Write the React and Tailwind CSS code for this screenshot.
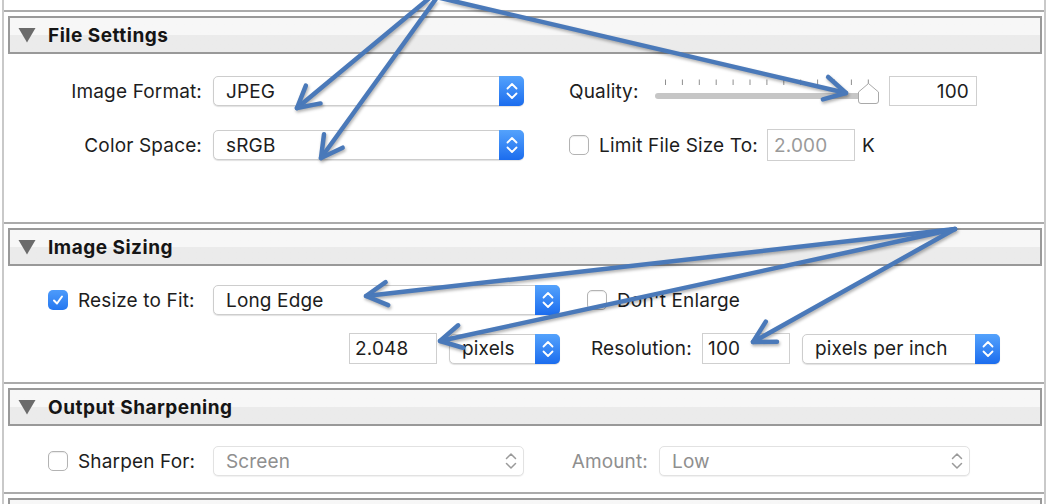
import React from "react";

function Stepper({ disabled }) {
  if (disabled) {
    return (
      <div className="flex w-[25px] items-center justify-center">
        <svg width="14" height="20" viewBox="0 0 14 20">
          <path d="M2.5 7.5 L7 3 L11.5 7.5" fill="none" stroke="#9a9a9a" strokeWidth="1.5" strokeLinecap="round" strokeLinejoin="round" />
          <path d="M2.5 12.5 L7 17 L11.5 12.5" fill="none" stroke="#9a9a9a" strokeWidth="1.5" strokeLinecap="round" strokeLinejoin="round" />
        </svg>
      </div>
    );
  }
  return (
    <div className="-my-px -mr-px flex w-[25px] items-center justify-center rounded-r-[5px] bg-linear-to-b from-[#54a2fc] to-[#1b6cee]">
      <svg width="14" height="20" viewBox="0 0 14 20">
        <path d="M2.5 7.5 L7 3 L11.5 7.5" fill="none" stroke="#ffffff" strokeWidth="1.8" strokeLinecap="round" strokeLinejoin="round" />
        <path d="M2.5 12.5 L7 17 L11.5 12.5" fill="none" stroke="#ffffff" strokeWidth="1.8" strokeLinecap="round" strokeLinejoin="round" />
      </svg>
    </div>
  );
}

function Select({ className, text, disabled }) {
  return (
    <div
      className={
        "flex h-[30px] shrink-0 rounded-[5px] border bg-white " +
        (disabled
          ? "border-[#e2e2e2] text-[#8f8f8f] shadow-[0_1px_1px_rgba(0,0,0,0.06)] "
          : "border-[#cdcdcd] text-[#1d1d1d] shadow-[0_1px_1px_rgba(0,0,0,0.12)] ") +
        className
      }
    >
      <div className="flex flex-1 items-center whitespace-nowrap pl-[12px] leading-none">{text}</div>
      <Stepper disabled={disabled} />
    </div>
  );
}

function Input({ className, text }) {
  return (
    <div className={"flex shrink-0 items-center border border-[#cfcfcf] bg-white leading-none " + className}>
      {text}
    </div>
  );
}

function Checkbox({ checked }) {
  if (checked) {
    return (
      <div className="flex h-[20px] w-[20px] shrink-0 items-center justify-center rounded-[5px] bg-linear-to-b from-[#4d9bfb] to-[#2477f0]">
        <svg width="14" height="14" viewBox="0 0 14 14">
          <path d="M3 7.5 L6 10.5 L11 3.5" fill="none" stroke="#ffffff" strokeWidth="2" strokeLinecap="round" strokeLinejoin="round" />
        </svg>
      </div>
    );
  }
  return (
    <div className="h-[20px] w-[20px] shrink-0 rounded-[5px] border border-[#b3b3b3] bg-white shadow-[inset_0_1px_1px_rgba(0,0,0,0.08)]" />
  );
}

function Header({ title }) {
  return (
    <div className="ml-[4px] mr-[2px] flex h-[38px] items-center border-2 border-[#999999] bg-linear-to-b from-[#f7f7f7] from-50% to-[#ebebeb] to-50%">
      <svg className="ml-[8px] shrink-0" width="18" height="16" viewBox="0 0 18 16">
        <path d="M0.5 1 L17.5 1 L9 15.5 Z" fill="#6b6b6b" />
      </svg>
      <div className="ml-[12px] whitespace-nowrap text-[19px] font-bold leading-none tracking-[0.5px] text-[#151515]">{title}</div>
    </div>
  );
}

function Section({ title, className, children }) {
  return (
    <div className="border-t-2 border-[#ababab] pt-[4px]">
      <Header title={title} />
      <div className={className}>{children}</div>
    </div>
  );
}

function Slider() {
  const ticks = [];
  for (let i = 0; i < 13; i++) {
    const x = 10.5 + i * 16.9;
    ticks.push(<line key={i} x1={x} y1="3.5" x2={x} y2="9" stroke="#8f8f8f" strokeWidth="1" />);
  }
  return (
    <svg className="shrink-0" width="226" height="30" viewBox="0 0 226 30">
      {ticks}
      <rect x="0" y="17" width="216" height="6" rx="3" fill="#c6c6c6" />
      <path
        d="M213.5 7.5 L223.5 16 L223.5 25 Q223.5 27.5 221 27.5 L206 27.5 Q203.5 27.5 203.5 25 L203.5 16 Z"
        fill="#ffffff"
        stroke="#a9a9a9"
        strokeWidth="1"
      />
    </svg>
  );
}

function Arrows() {
  const arrows = [
    [[432, -4], [297, 108]],
    [[438, -4], [321, 158]],
    [[436, -3], [846, 93]],
    [[955, 229], [366, 296]],
    [[955, 229], [440, 341]],
    [[955, 229], [753, 342]],
  ];
  return (
    <svg
      className="pointer-events-none absolute left-0 top-0 drop-shadow-[1px_2px_1.5px_rgba(0,0,0,0.3)]"
      width="1054"
      height="504"
      viewBox="0 0 1054 504"
    >
      {arrows.map(([o, t], i) => {
        const th = Math.atan2(o[1] - t[1], o[0] - t[0]);
        const L = 24;
        const a = 0.5;
        const b1 = [t[0] + L * Math.cos(th + a), t[1] + L * Math.sin(th + a)];
        const b2 = [t[0] + L * Math.cos(th - a), t[1] + L * Math.sin(th - a)];
        return (
          <g key={i} stroke="#4a79b9" strokeWidth="4.5" strokeLinecap="round" strokeLinejoin="round" fill="none">
            <line x1={o[0]} y1={o[1]} x2={t[0]} y2={t[1]} />
            <polyline points={`${b1[0]},${b1[1]} ${t[0]},${t[1]} ${b2[0]},${b2[1]}`} />
          </g>
        );
      })}
    </svg>
  );
}

export default function App() {
  return (
    <div className="relative h-[504px] w-[1054px] overflow-hidden whitespace-nowrap bg-white font-['Inter',sans-serif] text-[19px] tracking-[0.15px] text-[#1d1d1d]">
      <div className="ml-[2px] h-full w-[1044px] border-x-2 border-[#c9c9c9] pt-[10px]">
        <Section title="File Settings" className="h-[168px] pt-[22px]">
          <div className="flex h-[30px] items-center">
            <div className="w-[198px] shrink-0 text-right leading-none">Image Format:</div>
            <Select className="ml-[11px] w-[311px]" text="JPEG" />
            <div className="ml-[45px] w-[86px] shrink-0 leading-none">Quality:</div>
            <Slider />
            <Input className="ml-[8px] h-[30px] w-[88px] justify-end pr-[7px]" text="100" />
          </div>
          <div className="mt-[24px] flex h-[30px] items-center">
            <div className="w-[198px] shrink-0 text-right leading-none">Color Space:</div>
            <Select className="ml-[11px] w-[311px]" text="sRGB" />
            <div className="ml-[45px]">
              <Checkbox />
            </div>
            <div className="ml-[10px] w-[158px] shrink-0 whitespace-nowrap leading-none">Limit File Size To:</div>
            <Input className="ml-[10px] h-[32px] w-[88px] pl-[6px] text-[#9a9a9a]" text="2.000" />
            <div className="ml-[7px] leading-none">K</div>
          </div>
        </Section>

        <Section title="Image Sizing" className="h-[116px] pt-[19px]">
          <div className="flex h-[30px] items-center pl-[44px]">
            <Checkbox checked />
            <div className="ml-[10px] w-[125px] shrink-0 leading-none">Resize to Fit:</div>
            <Select className="ml-[10px] w-[347px]" text="Long Edge" />
            <div className="ml-[27px]">
              <Checkbox />
            </div>
            <div className="ml-[10px] leading-none">Don't Enlarge</div>
          </div>
          <div className="mt-[18px] flex h-[31px] items-center pl-[345px]">
            <Input className="h-[31px] w-[88px] pl-[5px]" text="2.048" />
            <Select className="ml-[12px] w-[111px]" text="pixels" />
            <div className="ml-[31px] w-[101px] shrink-0 leading-none">Resolution:</div>
            <Input className="ml-[10px] h-[31px] w-[88px] pl-[5px]" text="100" />
            <Select className="ml-[12px] w-[198px]" text="pixels per inch" />
          </div>
        </Section>

        <Section title="Output Sharpening" className="h-[66px] pt-[20px]">
          <div className="flex h-[30px] items-center pl-[44px]">
            <Checkbox />
            <div className="ml-[10px] w-[125px] shrink-0 leading-none">Sharpen For:</div>
            <Select disabled className="ml-[10px] w-[311px]" text="Screen" />
            <div className="w-[124px] shrink-0 text-right leading-none text-[#8f8f8f]">Amount:</div>
            <Select disabled className="ml-[11px] w-[311px]" text="Low" />
          </div>
        </Section>

        <Section title="" className="h-[40px]" />
      </div>
      <Arrows />
    </div>
  );
}
